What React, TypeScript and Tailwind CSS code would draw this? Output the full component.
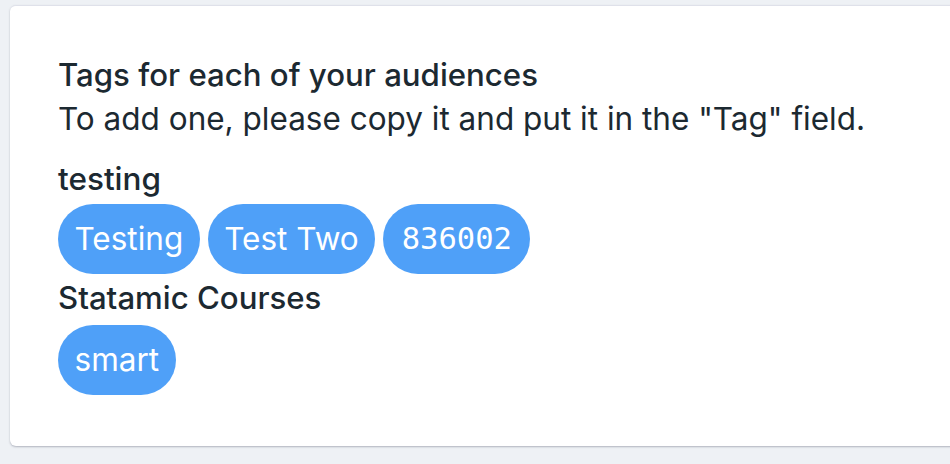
import React from "react";

const Pill = ({ children, mono }: { children: React.ReactNode; mono?: boolean }) => (
  <span
    className={
      "inline-flex items-center justify-center h-[70px] rounded-full bg-[#4fa0f8] text-white leading-none " +
      (mono ? "px-[18.5px] font-['DejaVu_Sans_Mono',monospace] text-[30.5px]" : "px-[16.5px] text-[31.5px]")
    }
  >
    {children}
  </span>
);

export default function App() {
  return (
    <div className="w-[950px] h-[464px] bg-[#eef1f5] pt-[5px] pl-[10px] overflow-hidden font-['Inter',sans-serif]">
      <div className="w-[960px] h-[441px] bg-white rounded-[6px] shadow-[0_1px_2px_rgba(60,65,90,0.35)] border-t border-[#dfe1ea] pl-[48px] pt-[47px] text-[#1c2931]">
        <div className="text-[31.2px] leading-[44px] font-medium">Tags for each of your audiences</div>
        <div className="text-[31.5px] leading-[44px]">To add one, please copy it and put it in the "Tag" field.</div>
        <div className="mt-[15.5px] text-[31.5px] leading-[44px] font-medium">testing</div>
        <div className="flex gap-[8px] mt-[3.5px]">
          <Pill>Testing</Pill>
          <Pill>Test Two</Pill>
          <Pill mono>836002</Pill>
        </div>
        <div className="mt-[1.5px] text-[31.2px] leading-[44px] font-medium">Statamic Courses</div>
        <div className="flex gap-[8px] mt-[5.5px]">
          <Pill>smart</Pill>
        </div>
      </div>
    </div>
  );
}
